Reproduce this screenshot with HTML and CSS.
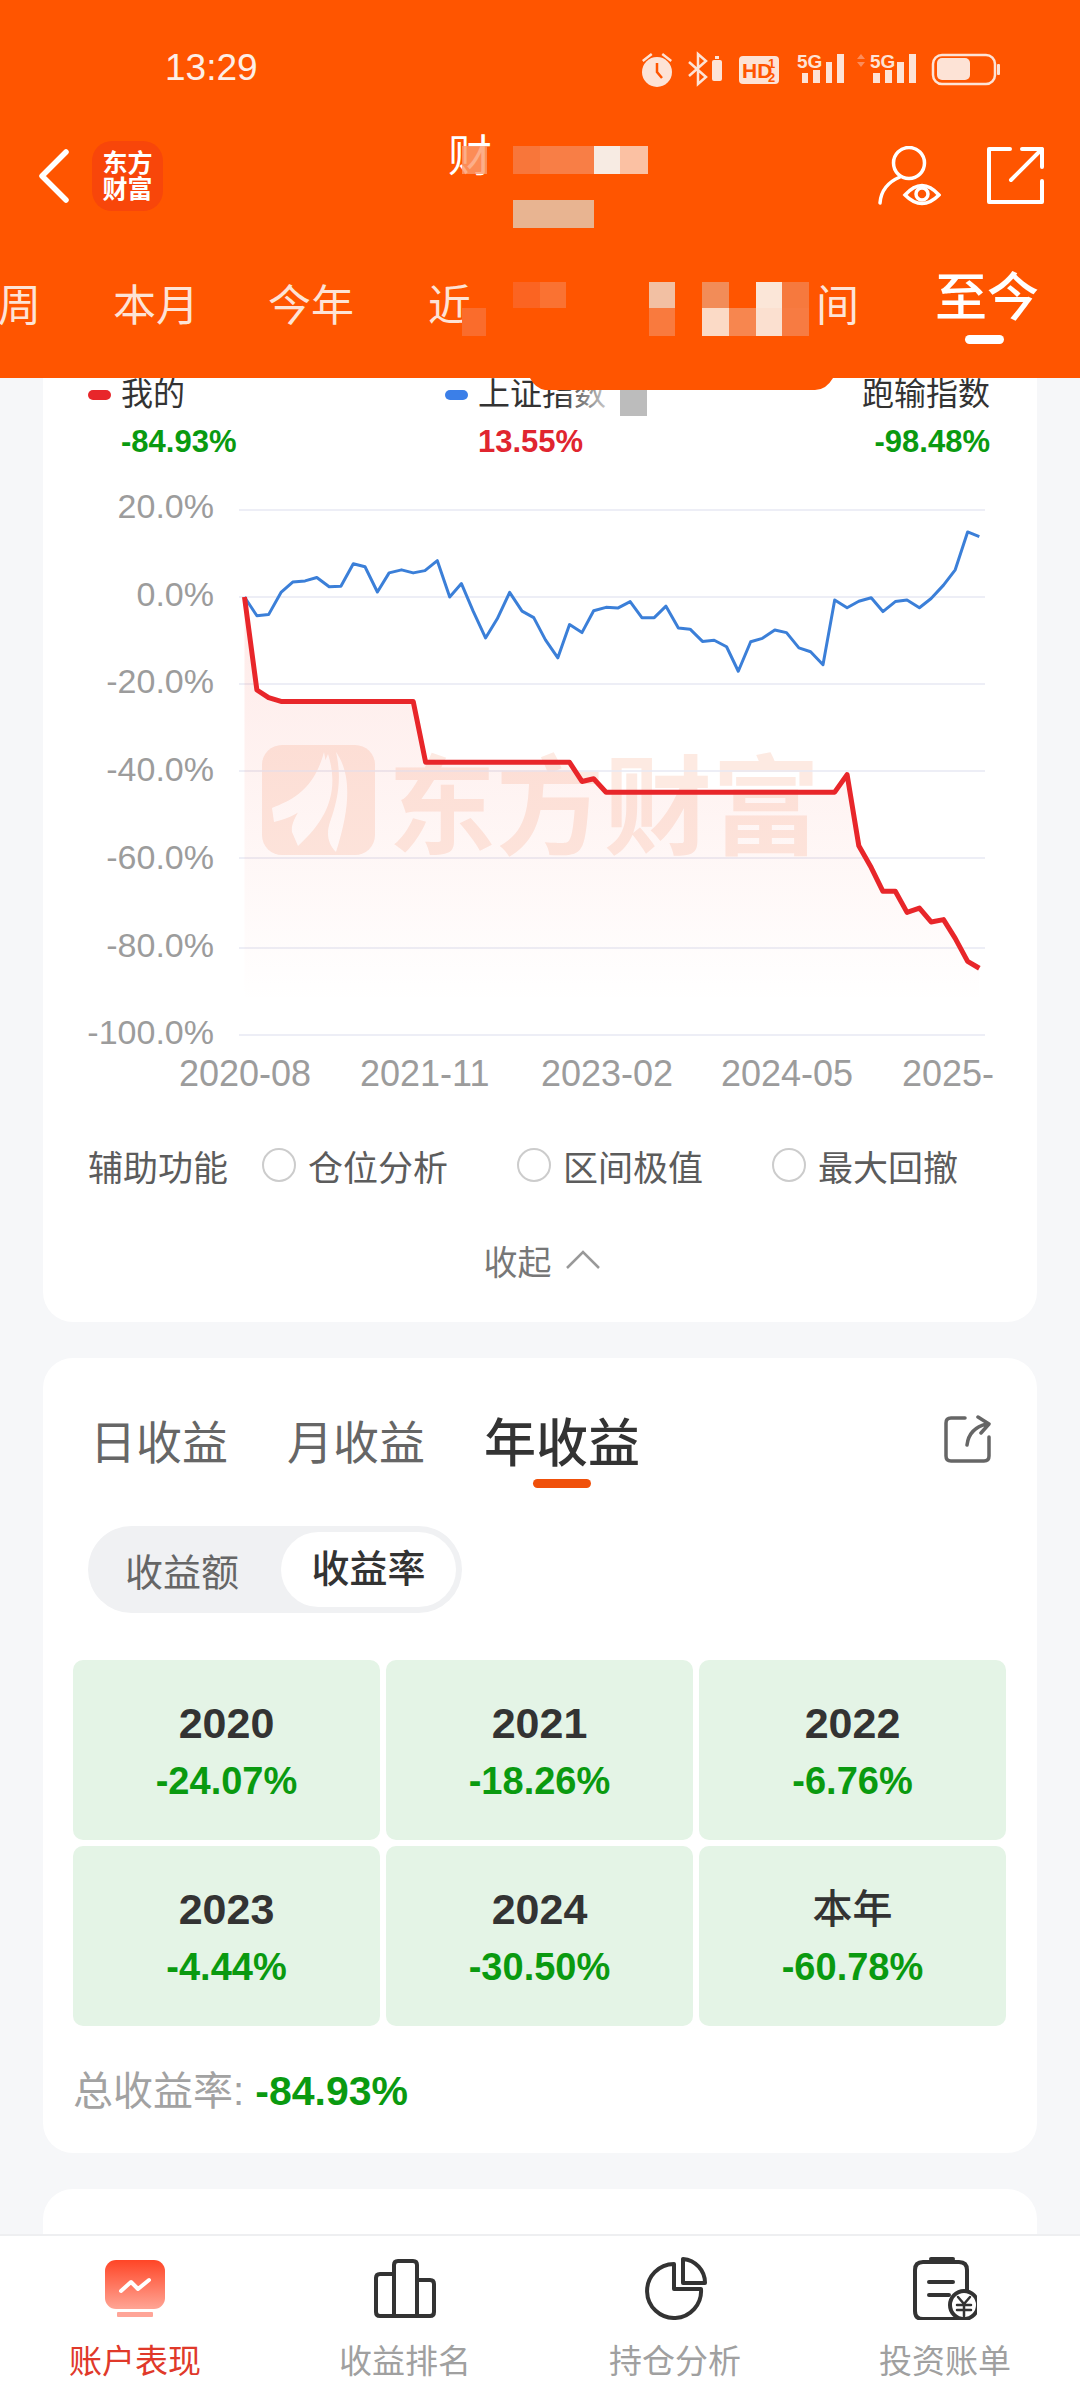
FILE: index.html
```html
<!doctype html>

<html>
  <head>
    <meta http-equiv="Content-Type" content="text/html; charset=utf-8">
    <title>账户表现</title>
    <link rel="stylesheet" href="styles.css">
  </head>
  <body>

    <div class="header">
      <div class="status">
        <span class="time">13:29</span>
        <svg class="status-icons" viewBox="636 50 368 40" width="368" height="40">
          <g fill="#fde3d6" stroke="none">
            <circle cx="657" cy="72" r="15"/>
            <path d="M642 60l9-7 1.500 2-9 7zM672 60l-9-7-1.500 2 9 7z"/>
            <rect x="712" y="60" width="10" height="21" rx="2"/>
            <rect x="715" y="56" width="4" height="3"/>
            <rect x="739" y="56" width="40" height="28" rx="4"/>
            <rect x="802" y="73" width="6" height="10"/>
            <rect x="813" y="70" width="7" height="13"/>
            <rect x="826" y="62" width="6" height="21"/>
            <rect x="837" y="54" width="7" height="29"/>
            <rect x="873" y="73" width="7" height="10"/>
            <rect x="885" y="70" width="7" height="13"/>
            <rect x="897" y="62" width="7" height="21"/>
            <rect x="909" y="54" width="7" height="29"/>
            <rect x="937" y="58" width="33" height="22" rx="5"/>
            <rect x="997" y="64" width="3" height="11" rx="1"/>
            <text class="st5g" x="797" y="68">5G</text>
            <text class="st5g" x="870" y="68">5G</text>
          </g>
          <path d="M657 63v9l5 6" fill="none" stroke="#ff5500" stroke-width="2.500"/>
          <path d="M689 62l17 15-8 7V54l8 7-17 15" fill="none" stroke="#fde3d6" stroke-width="2.500"/>
          <path d="M861 54l4 5h-8zM861 67l4-5h-8z" fill="#fb8d5c"/>
          <rect x="933" y="55" width="62" height="29" rx="9" fill="none" stroke="#fde3d6" stroke-width="2.500"/>
          <text class="sthd" x="742" y="78">HD</text>
          <text class="sthd-small" x="768" y="68">1</text>
          <text class="sthd-small" x="768" y="82">2</text>
        </svg>
      </div>

      <div class="nav">
        <svg class="back" viewBox="0 0 32 54" width="32" height="54">
          <path d="M28 3L4 27l24 24" fill="none" stroke="#fff" stroke-width="5.500" stroke-linecap="round" stroke-linejoin="round"/>
        </svg>
        <div class="logo"><span>东方</span><span>财富</span></div>
        <div class="title">财</div>
        <svg class="watch" viewBox="0 0 64 60" width="64" height="60">
          <g fill="none" stroke="#fff" stroke-width="3.500" stroke-linecap="round">
            <circle cx="32" cy="17" r="15.500"/>
            <path d="M3 57C4 44 11 36 23 31"/>
            <path d="M28 49Q45 30 62 49Q45 66 28 49z" fill="#ff5500"/>
            <circle cx="45" cy="48" r="6"/>
          </g>
        </svg>
        <svg class="open" viewBox="0 0 58 58" width="58" height="58">
          <path d="M24 2H3v53h53V34M36 2h20v18M56 2L25 33" fill="none" stroke="#fff" stroke-width="4" stroke-linecap="round" stroke-linejoin="round"/>
        </svg>
      </div>

      <div class="tabs">
        <span class="t-week">周</span>
        <span class="t-month">本月</span>
        <span class="t-year">今年</span>
        <span class="t-near">近</span>
        <span class="t-range">间</span>
        <span class="t-now">至今</span>
      </div>
    </div>

    <div class="main">
      <div class="card first">
        <div class="legend">
          <div class="lg mine">
            <div class="lg-name"><i class="dot red"></i>我的</div>
            <div class="lg-val down">-84.93%</div>
          </div>
          <div class="lg index">
            <div class="lg-name"><i class="dot blue"></i>上证指数</div>
            <div class="lg-val up">13.55%</div>
          </div>
          <div class="lg lose">
            <div class="lg-name">跑输指数</div>
            <div class="lg-val down">-98.48%</div>
          </div>
        </div>

        <svg class="chart" viewBox="43 470 994 630" width="994" height="630">
          <defs>
            <linearGradient id="area" x1="0" y1="0" x2="0" y2="1">
              <stop offset="0" stop-color="#f8402c" stop-opacity=".11"/>
              <stop offset=".75" stop-color="#f8402c" stop-opacity=".03"/>
              <stop offset="1" stop-color="#f8402c" stop-opacity="0"/>
            </linearGradient>
          </defs>

          <g class="wm">
            <rect x="262" y="745" width="113" height="110" rx="20"/>
            <path d="M272 808c20-8 42-18 52-56 8 34-14 62-50 70zM292 832c-2-14 14-26 36-78 14 44-8 72-30 92zM336 752c14 20 16 50 0 100-8-8-10-18-6-30 8-22 12-44 6-70z" fill="#fff"/>
            <text class="wm-text" x="388" y="846">东方财富</text>
          </g>

          <g class="grid">
            <path d="M239 510H985M239 597H985M239 684H985M239 771H985M239 858H985M239 948H985M239 1035H985"/>
          </g>

          <g transform="translate(0,460) scale(.6887,.3827)">
            <polygon fill="url(#area)" points="355,358 373,601 390,621 408,631 600,631 618,790 827,790 845,840 862,833 880,868 1212,868 1230,822 1247,1008 1265,1065 1282,1127 1300,1127 1317,1182 1335,1171 1352,1207 1370,1201 1387,1250 1405,1310 1422,1328 1422,1420 355,1420"/>
            <polyline class="ln-blue" vector-effect="non-scaling-stroke" points="355,358 373,407 390,404 408,346 425,319 443,316 460,307 478,331 495,330 513,271 530,279 548,345 565,295 583,287 600,295 617,289 635,263 653,358 670,323 687,395 705,465 722,415 740,346 758,395 775,412 792,470 810,517 827,430 845,451 862,394 880,385 897,387 915,370 932,412 950,412 967,382 985,439 1002,442 1020,474 1037,471 1055,488 1072,552 1090,475 1107,466 1125,444 1142,451 1160,491 1177,501 1195,535 1212,366 1230,386 1247,369 1265,360 1282,396 1300,370 1317,366 1335,386 1352,362 1370,327 1387,287 1405,188 1422,200"/>
            <polyline class="ln-red" vector-effect="non-scaling-stroke" points="355,358 373,601 390,621 408,631 600,631 618,790 827,790 845,840 862,833 880,868 1212,868 1230,822 1247,1008 1265,1065 1282,1127 1300,1127 1317,1182 1335,1171 1352,1207 1370,1201 1387,1250 1405,1310 1422,1328"/>
          </g>

          <g class="axis-y">
            <text x="214" y="518">20.0%</text>
            <text x="214" y="606">0.0%</text>
            <text x="214" y="693">-20.0%</text>
            <text x="214" y="781">-40.0%</text>
            <text x="214" y="869">-60.0%</text>
            <text x="214" y="957">-80.0%</text>
            <text x="214" y="1044">-100.0%</text>
          </g>
          <g class="axis-x">
            <text x="179" y="1086">2020-08</text>
            <text x="360" y="1086">2021-11</text>
            <text x="541" y="1086">2023-02</text>
            <text x="721" y="1086">2024-05</text>
            <text x="902" y="1086">2025-</text>
          </g>
        </svg>

        <div class="aux">
          <span class="aux-label">辅助功能</span>
          <span class="opt"><i class="radio"></i>仓位分析</span>
          <span class="opt"><i class="radio"></i>区间极值</span>
          <span class="opt"><i class="radio"></i>最大回撤</span>
        </div>

        <div class="fold">
          <span>收起</span>
          <svg viewBox="0 0 36 20" width="36" height="20">
            <path d="M2 18L18 2l16 16" fill="none" stroke="#999" stroke-width="2.500"/>
          </svg>
        </div>
      </div>

      <div class="card profit">
        <div class="period">
          <span class="p-tab">日收益</span>
          <span class="p-tab">月收益</span>
          <span class="p-tab on">年收益</span>
          <svg class="p-share" viewBox="0 0 48 48" width="48" height="48">
            <g fill="none" stroke="#666" stroke-width="3.500" stroke-linecap="round" stroke-linejoin="round">
              <path d="M21 3H7Q2 3 2 8V41Q2 46 7 46H40Q45 46 45 41V22"/>
              <path d="M23 30Q25 13 43 9M34 2L45 9 37 18"/>
            </g>
          </svg>
        </div>

        <div class="seg">
          <span class="seg-a">收益额</span>
          <span class="seg-b">收益率</span>
        </div>

        <div class="years">
          <div class="yr"><b>2020</b><em>-24.07%</em></div>
          <div class="yr"><b>2021</b><em>-18.26%</em></div>
          <div class="yr"><b>2022</b><em>-6.76%</em></div>
          <div class="yr"><b>2023</b><em>-4.44%</em></div>
          <div class="yr"><b>2024</b><em>-30.50%</em></div>
          <div class="yr"><b class="cn">本年</b><em>-60.78%</em></div>
        </div>

        <div class="total">总收益率: <b>-84.93%</b></div>
      </div>

      <div class="card last"></div>
    </div>

    <div class="tabbar">
      <div class="item active">
        <svg viewBox="0 0 64 64" width="64" height="64">
          <defs>
            <linearGradient id="act" x1="0" y1="0" x2="0" y2="1">
              <stop offset="0" stop-color="#ff4526"/>
              <stop offset="1" stop-color="#ffa595"/>
            </linearGradient>
          </defs>
          <rect x="2" y="4" width="60" height="49" rx="11" fill="url(#act)"/>
          <rect x="14" y="56" width="36" height="5" rx="1" fill="#ffa598"/>
          <path d="M18 35l10-9 7 7 11-9" fill="none" stroke="#fff" stroke-width="4" stroke-linecap="round" stroke-linejoin="round"/>
        </svg>
        <span>账户表现</span>
      </div>
      <div class="item">
        <svg viewBox="0 0 64 64" width="64" height="64">
          <g fill="none" stroke="#333" stroke-width="4" stroke-linejoin="round">
            <path d="M21 18H7Q3 18 3 22V56Q3 60 7 60H21z"/>
            <path d="M21 60V9Q21 5 25 5H40Q44 5 44 9V60z"/>
            <path d="M44 24H57Q61 24 61 28V56Q61 60 57 60H44"/>
          </g>
        </svg>
        <span>收益排名</span>
      </div>
      <div class="item">
        <svg viewBox="0 0 64 64" width="64" height="64">
          <g fill="none" stroke="#333" stroke-width="4" stroke-linejoin="round">
            <path d="M31 8V33H58A27 27 0 1 1 31 8z"/>
            <path d="M40 3V27H62A24 24 0 0 0 40 3z"/>
          </g>
        </svg>
        <span>持仓分析</span>
      </div>
      <div class="item">
        <svg viewBox="0 0 64 64" width="64" height="64">
          <g fill="none" stroke="#333" stroke-width="4" stroke-linecap="round" stroke-linejoin="round">
            <path d="M10 6H46Q54 6 54 14V55Q54 63 46 63H10Q2 63 2 55V14Q2 6 10 6z"/>
            <path d="M18 3H40"/>
            <path d="M16 26H40M16 39H36"/>
            <circle cx="51" cy="49" r="14" fill="#fff"/>
            <path d="M45 41l6 7 6-7M44 49H58M44 54H58M51 48V60" stroke-width="2.500"/>
          </g>
        </svg>
        <span>投资账单</span>
      </div>
    </div>

    <!-- pixelated blocks over the name and tabs -->
    <svg class="mosaic" viewBox="0 0 1080 420" width="1080" height="420">
      <defs>
        <linearGradient id="fade" x1="0" y1="0" x2="1" y2="0">
          <stop offset="0" stop-color="#fff" stop-opacity="0"/>
          <stop offset="1" stop-color="#fff" stop-opacity=".95"/>
        </linearGradient>
      </defs>
      <rect x="462" y="146" width="25" height="28" fill="#fb9a6c" opacity=".8"/>
      <rect x="513" y="146" width="27" height="28" fill="#f8763a"/>
      <rect x="540" y="146" width="54" height="28" fill="#f87e46"/>
      <rect x="594" y="146" width="26" height="28" fill="#f7ebe3"/>
      <rect x="620" y="146" width="28" height="28" fill="#fbc1a3"/>
      <rect x="513" y="200" width="81" height="28" fill="#e8b491"/>
      <rect x="513" y="282" width="27" height="26" fill="#fb6422"/>
      <rect x="540" y="282" width="26" height="26" fill="#fa7232"/>
      <rect x="462" y="308" width="24" height="28" fill="#fa6c2c"/>
      <rect x="649" y="282" width="26" height="26" fill="#f2c0a3"/>
      <rect x="702" y="282" width="27" height="26" fill="#f28c58"/>
      <rect x="756" y="282" width="26" height="26" fill="#fbe6d8"/>
      <rect x="782" y="282" width="27" height="26" fill="#f6793e"/>
      <rect x="649" y="308" width="26" height="28" fill="#f97a3e"/>
      <rect x="702" y="308" width="27" height="28" fill="#fbdac6"/>
      <rect x="729" y="308" width="27" height="28" fill="#f7864f"/>
      <rect x="756" y="308" width="26" height="28" fill="#fbe0d0"/>
      <rect x="782" y="308" width="27" height="28" fill="#f77b42"/>
      <path d="M530 378H833Q826 390 815 390H545Q535 388 530 378z" fill="#ff5500"/>
      <rect x="560" y="390" width="60" height="26" fill="url(#fade)"/>
      <rect x="620" y="390" width="27" height="26" fill="#bcbcbc"/>
    </svg>

  </body>
</html>
```

FILE: styles.css
```css
* {
  box-sizing: border-box;
}

body {
  background: #f6f7f9;
  color: #333;
  display: flex;
  flex-direction: column;
  font-family: "Liberation Sans", "Noto Sans CJK SC", sans-serif;
  height: 2400px;
  margin: 0;
  overflow: hidden;
  position: relative;
  width: 1080px;
}

/* orange top */
.header {
  background: #ff5500;
  color: #fff;
  flex: none;
  height: 378px;
  padding-top: 40px;
}

.status {
  align-items: center;
  display: flex;
  height: 56px;
  justify-content: space-between;
  padding: 0 76px 0 165px;
}
.time {
  color: #fdeee6;
  font-size: 37px;
}
.status-icons {
  margin-top: 4px;
}
.st5g {
  font: bold 19px "Liberation Sans", sans-serif;
}
.sthd {
  fill: #ff5500;
  font: bold 21px "Liberation Sans", sans-serif;
}
.sthd-small {
  fill: #ff5500;
  font: bold 13px "Liberation Sans", sans-serif;
}

.nav {
  align-items: center;
  display: flex;
  height: 96px;
  margin-top: 32px;
  padding-left: 38px;
}
.back {
  flex: none;
}
.logo {
  align-items: center;
  background: #f8460a;
  border-radius: 20px;
  display: flex;
  flex: none;
  flex-direction: column;
  font-size: 25px;
  font-weight: bold;
  height: 70px;
  justify-content: center;
  line-height: 26px;
  margin-left: 22px;
  width: 71px;
}
.title {
  font-size: 44px;
  line-height: 44px;
  margin-bottom: 38px;
  margin-left: 285px;
  width: 44px;
}
.watch {
  margin-left: 385px;
}
.open {
  margin-left: 45px;
}

.tabs {
  align-items: center;
  color: #fde3d6;
  display: flex;
  font-size: 43px;
  height: 88px;
  margin-top: 34px;
  white-space: nowrap;
}
.t-week {
  margin-left: -2px;
}
.t-month {
  margin-left: 72px;
}
.t-year {
  margin-left: 69px;
}
.t-near {
  margin-left: 74px;
}
.t-range {
  margin-left: 345px;
}
.t-now {
  color: #fff;
  font-size: 52px;
  font-weight: 500;
  margin-bottom: 18px;
  margin-left: 76px;
  position: relative;
}
.t-now::after {
  background: #fff;
  border-radius: 5px;
  bottom: -13px;
  content: "";
  height: 9px;
  left: 30px;
  position: absolute;
  width: 39px;
}

/* scrolling part */
.main {
  flex: 1;
  overflow: hidden;
}
.card {
  background: #fff;
  border-radius: 30px;
  margin: 36px 43px 0;
}
.first {
  border-radius: 0 0 30px 30px;
  margin-top: 0;
  padding-bottom: 37px;
}
.profit {
  padding: 46px 0 32px;
}
.last {
  height: 200px;
}

.legend {
  display: flex;
  padding: 0 47px 0 45px;
}
.lg-name {
  align-items: center;
  color: #333;
  display: flex;
  font-size: 32px;
  height: 33px;
  line-height: 33px;
  white-space: nowrap;
}
.lg-val {
  font-size: 31px;
  font-weight: bold;
  line-height: 32px;
  margin-top: 15px;
  padding-left: 33px;
}
.mine {
  width: 357px;
}
.index {
  flex: 1;
}
.lose {
  text-align: right;
}
.lose .lg-name {
  justify-content: flex-end;
}
.dot {
  border-radius: 5px;
  height: 10px;
  margin-right: 10px;
  width: 23px;
}
.red {
  background: #e8262a;
}
.blue {
  background: #3b7fe8;
}
.down {
  color: #0a9a10;
}
.up {
  color: #e0252f;
}

.chart {
  display: block;
  margin-top: 12px;
}
.grid path {
  fill: none;
  stroke: #e7e9f3;
  stroke-width: 1.5;
}
.wm rect {
  fill: #fdeae2;
}
.wm-text {
  fill: #fdeae2;
  font: bold 108px "Noto Sans CJK SC", sans-serif;
}
.ln-blue {
  fill: none;
  stroke: #3b7fd8;
  stroke-linejoin: round;
  stroke-width: 3;
}
.ln-red {
  fill: none;
  stroke: #e8262a;
  stroke-linejoin: round;
  stroke-width: 5;
}
.axis-y text {
  fill: #9c9c9c;
  font-size: 34px;
  text-anchor: end;
}
.axis-x text {
  fill: #9c9c9c;
  font-size: 36px;
}

.aux {
  align-items: center;
  color: #5c5c5c;
  display: flex;
  font-size: 35px;
  height: 60px;
  margin-top: 35px;
  padding-left: 45px;
}
.aux-label {
  width: 174px;
}
.opt {
  align-items: center;
  display: flex;
  width: 255px;
}
.radio {
  border: 2.500px solid #ccc;
  border-radius: 50%;
  height: 34px;
  margin-right: 12px;
  width: 34px;
}

.fold {
  align-items: center;
  color: #777;
  display: flex;
  font-size: 34px;
  gap: 13px;
  height: 50px;
  justify-content: center;
  margin-top: 40px;
  padding-left: 4px;
}

.period {
  align-items: center;
  color: #666;
  display: flex;
  font-size: 46px;
  gap: 59px;
  height: 70px;
  padding: 0 45px 0 47px;
}
.p-tab {
  position: relative;
}
.on {
  color: #333;
  font-size: 52px;
  font-weight: 500;
}
.on::after {
  background: #f0500a;
  border-radius: 5px;
  bottom: -11px;
  content: "";
  height: 9px;
  left: 49px;
  position: absolute;
  width: 58px;
}
.p-share {
  margin-left: auto;
}

.seg {
  align-items: center;
  background: #f0f1f3;
  border-radius: 44px;
  display: flex;
  font-size: 38px;
  height: 87px;
  margin: 52px 0 0 45px;
  padding: 6px;
  width: 374px;
}
.seg-a {
  color: #666;
  padding-right: 11px;
  text-align: center;
  width: 187px;
}
.seg-b {
  background: #fff;
  border-radius: 38px;
  font-weight: 500;
  height: 75px;
  line-height: 75px;
  text-align: center;
  width: 175px;
}

.years {
  display: grid;
  gap: 6px;
  grid-template-columns: repeat(3, 1fr);
  grid-auto-rows: 180px;
  margin: 47px 31px 0 30px;
}
.yr {
  align-items: center;
  background: #e4f4e6;
  border-radius: 10px;
  display: flex;
  flex-direction: column;
  padding-top: 38px;
}
.yr b {
  color: #333;
  font-size: 43px;
  font-weight: bold;
  line-height: 50px;
}
.yr b.cn {
  font-size: 40px;
  font-weight: 500;
}
.yr em {
  color: #0a9a10;
  font-size: 38px;
  font-style: normal;
  font-weight: bold;
  line-height: 50px;
  margin-top: 8px;
}

.total {
  color: #a2a2a2;
  font-size: 40px;
  line-height: 60px;
  margin-top: 35px;
  padding-left: 30px;
}
.total b {
  color: #0a9a10;
  font-size: 41px;
}

/* bottom bar */
.tabbar {
  background: #fff;
  border-top: 2px solid #eeeff1;
  display: flex;
  flex: none;
  height: 166px;
  padding-top: 20px;
}
.item {
  align-items: center;
  color: #a0a0a0;
  display: flex;
  flex: 1;
  flex-direction: column;
  font-size: 33px;
}
.item span {
  line-height: 40px;
  margin-top: 22px;
}
.item.active {
  color: #e0392a;
}

.mosaic {
  left: 0;
  position: absolute;
  top: 0;
}
```
